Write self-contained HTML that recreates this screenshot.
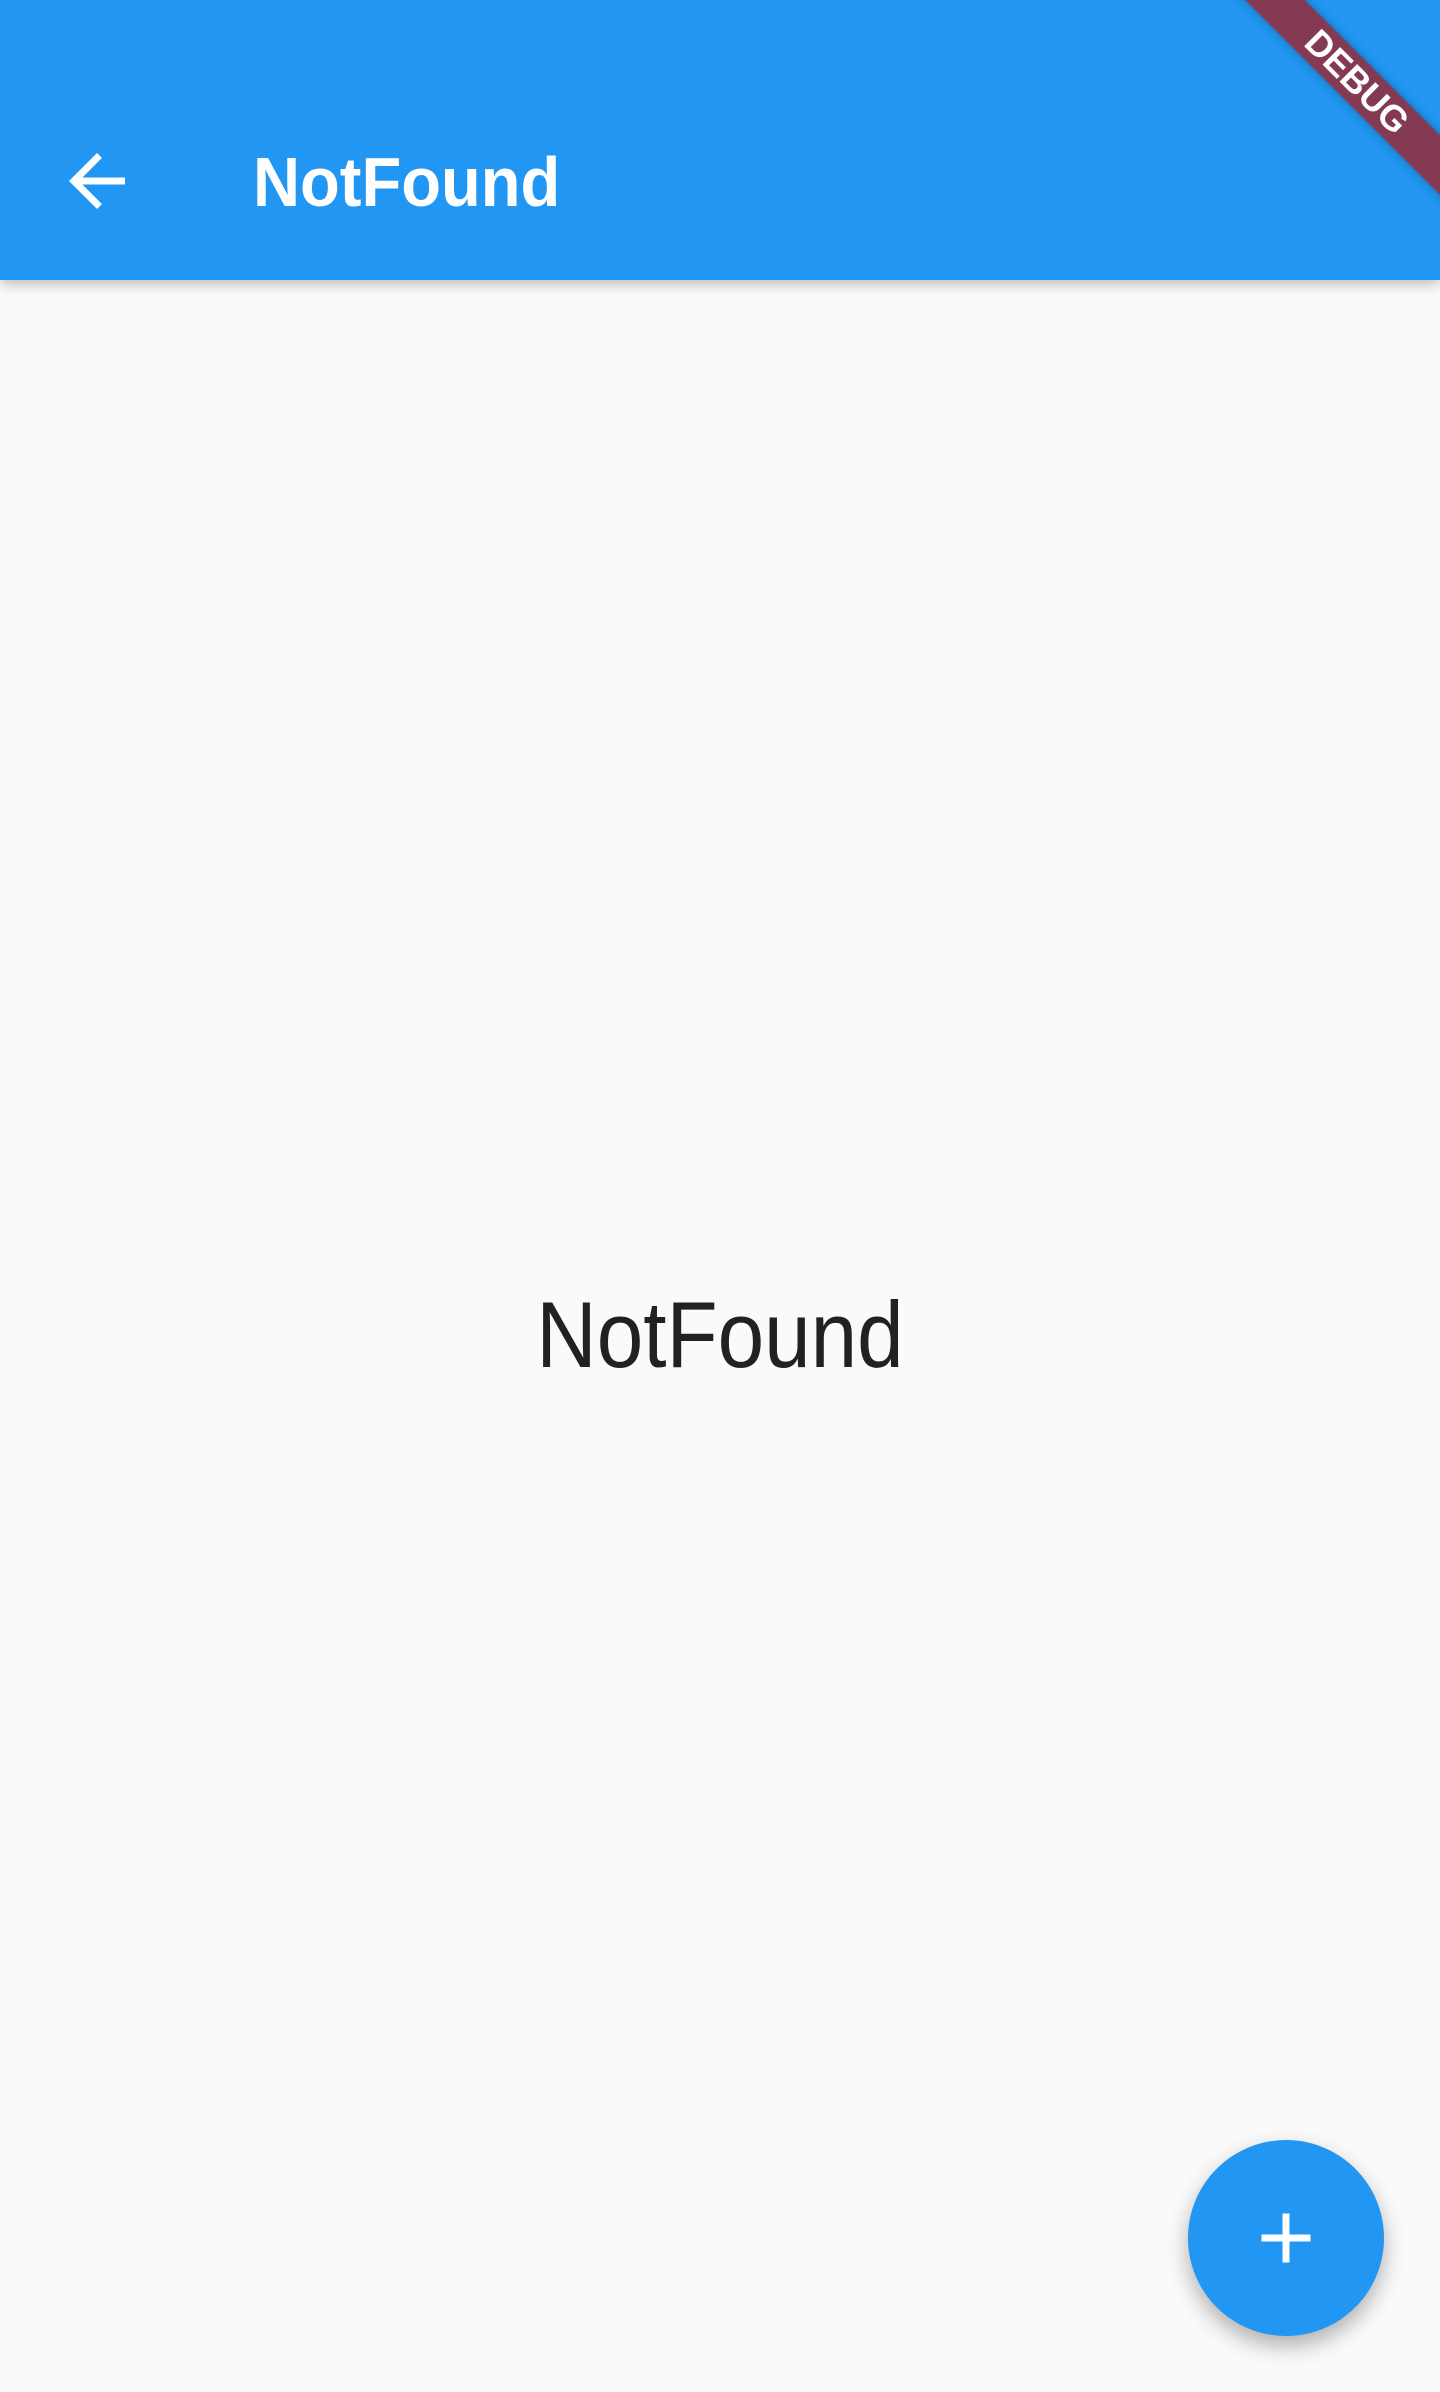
<!DOCTYPE html>
<html><head><meta charset="utf-8"><style>
html,body{margin:0;padding:0}
body{width:1440px;height:2392px;background:#fafafa;position:relative;overflow:hidden;font-family:"Liberation Sans",sans-serif}
.bar{position:absolute;left:0;top:0;width:1440px;height:280px;background:#2196f3;box-shadow:0 4px 12px rgba(0,0,0,.25)}
.title{position:absolute;left:253px;top:140px;color:#fff;font-size:70px;font-weight:bold;line-height:84px;transform:scaleX(0.93);transform-origin:left center}
.center{position:absolute;left:0;width:1440px;top:1277px;text-align:center;font-size:94px;color:#212121;line-height:116px;transform:scaleX(0.89)}
.fab{position:absolute;left:1188px;top:2140px;width:196px;height:196px;border-radius:50%;background:#2196f3;box-shadow:0 10px 22px rgba(0,0,0,.3)}
.banner{position:absolute;left:1157px;top:61px;width:400px;height:42px;background:#833a52;transform:rotate(45deg);color:#fff;font-weight:bold;font-size:36px;line-height:42px;text-align:center;box-shadow:0 0 10px rgba(0,0,0,.3)}
</style></head><body>
<div class="bar">
<svg style="position:absolute;left:55px;top:139px" width="84" height="84" viewBox="0 0 24 24"><path d="M20 11H7.83l5.59-5.59L12 4l-8 8 8 8 1.41-1.41L7.83 13H20v-2z" fill="#fff"/></svg>
<div class="title">NotFound</div>
</div>
<div class="banner">DEBUG</div>
<div class="center">NotFound</div>
<div class="fab"><svg style="position:absolute;left:56px;top:56px" width="84" height="84" viewBox="0 0 24 24"><path d="M19 13h-6v6h-2v-6H5v-2h6V5h2v6h6v2z" fill="#fff"/></svg></div>
</body></html>
